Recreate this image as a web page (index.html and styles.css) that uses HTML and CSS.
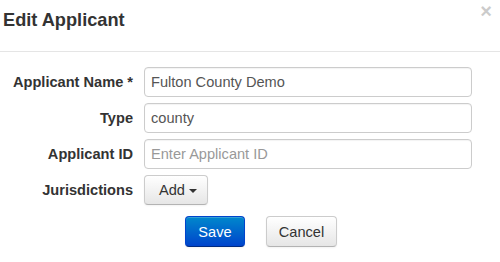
FILE: index.html
```html
<!DOCTYPE html>
<html>
<head>
<meta charset="utf-8">
<link rel="stylesheet" href="styles.css">
</head>
<body>
<div class="modal">
  <div class="modal-header">
    <h3 class="title">Edit Applicant</h3>
    <span class="close">&times;</span>
  </div>
  <form class="form">
    <label class="label">Applicant Name *</label>
    <input class="input" type="text" value="Fulton County Demo">
    <label class="label">Type</label>
    <input class="input" type="text" value="county">
    <label class="label">Applicant ID</label>
    <input class="input" type="text" placeholder="Enter Applicant ID">
    <label class="label">Jurisdictions</label>
    <div class="cell"><button type="button" class="btn btn-add">Add<span class="caret"></span></button></div>
  </form>
  <div class="actions">
    <button type="button" class="btn btn-primary">Save</button>
    <button type="button" class="btn btn-default">Cancel</button>
  </div>
</div>
</body>
</html>
```
FILE: styles.css
```css
html, body {
  margin: 0;
  padding: 0;
  background: #fff;
}
body {
  font-family: "Liberation Sans", Arial, sans-serif;
  font-size: 14.6px;
  color: #333;
}
.modal {
  width: 500px;
  height: 262px;
}
.modal-header {
  height: 51px;
  border-bottom: 1px solid #e5e5e5;
  display: flex;
  justify-content: space-between;
  align-items: flex-start;
  padding: 0 8px 0 3px;
  box-sizing: content-box;
  width: 489px;
}
.title {
  margin: 10px 0 0 0;
  font-size: 18.2px;
  line-height: 20px;
  font-weight: bold;
  color: #333;
}
.close {
  margin-top: 1px;
  font-size: 20px;
  line-height: 20px;
  font-weight: bold;
  color: #000;
  opacity: 0.2;
}
.form {
  display: grid;
  grid-template-columns: 133px 328px;
  column-gap: 11px;
  row-gap: 6px;
  margin: 15px 0 0 0;
}
.label {
  font-weight: bold;
  text-align: right;
  align-self: center;
  color: #333;
  white-space: nowrap;
}
.input {
  box-sizing: border-box;
  height: 30px;
  margin: 0;
  padding: 0 6px;
  border: 1px solid #ccc;
  border-radius: 4px;
  font-family: "Liberation Sans", Arial, sans-serif;
  font-size: 14.6px;
  color: #555;
  background: #fff;
  box-shadow: inset 0 1px 1px rgba(0,0,0,0.05);
  outline: none;
}
.input::placeholder {
  color: #999;
}
.cell {
  display: flex;
}
.btn {
  box-sizing: border-box;
  font-family: "Liberation Sans", Arial, sans-serif;
  font-size: 14.6px;
  border-radius: 4px;
  margin: 0;
  cursor: pointer;
}
.btn-add {
  height: 30px;
  width: 64px;
  padding: 0 0 0 14px;
  display: flex;
  align-items: center;
  color: #333;
  border: 1px solid #ccc;
  border-bottom-color: #b3b3b3;
  background: linear-gradient(#ffffff, #e6e6e6);
  box-shadow: inset 0 1px 0 rgba(255,255,255,0.2), 0 1px 2px rgba(0,0,0,0.05);
}
.caret {
  display: inline-block;
  width: 0;
  height: 0;
  margin-left: 4px;
  margin-top: 1px;
  border-top: 4px solid #333;
  border-left: 4px solid transparent;
  border-right: 4px solid transparent;
}
.actions {
  display: flex;
  gap: 21px;
  padding-left: 185px;
  margin-top: 11px;
}
.btn-primary {
  height: 31px;
  width: 60px;
  padding: 0;
  color: #fff;
  border: 1px solid #0044cc;
  border-bottom-color: #002a80;
  background: linear-gradient(#0088cc, #0044cc);
  box-shadow: inset 0 1px 0 rgba(255,255,255,0.2), 0 1px 2px rgba(0,0,0,0.05);
}
.btn-default {
  height: 31px;
  width: 71px;
  padding: 0;
  color: #333;
  border: 1px solid #ccc;
  border-bottom-color: #b3b3b3;
  background: linear-gradient(#ffffff, #e6e6e6);
  box-shadow: inset 0 1px 0 rgba(255,255,255,0.2), 0 1px 2px rgba(0,0,0,0.05);
}
```
